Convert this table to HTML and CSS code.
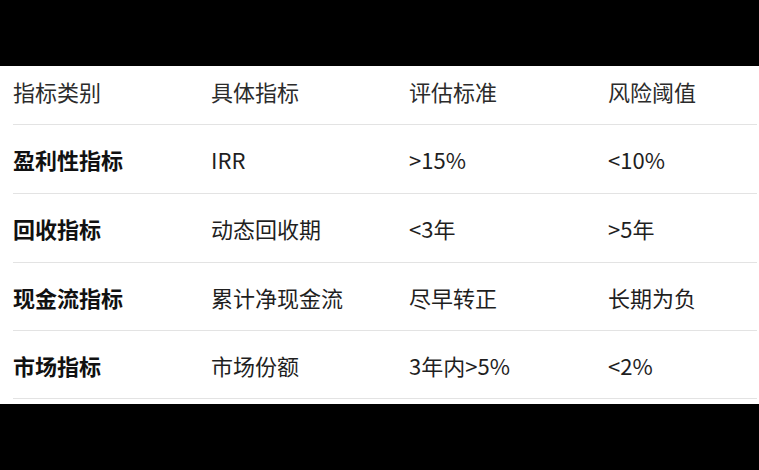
FILE: index.html
```html
<!DOCTYPE html>
<html lang="zh">
<head>
<meta charset="utf-8">
<link rel="stylesheet" href="styles.css">
</head>
<body>
<div class="sheet">
  <div class="table">
    <div class="row head">
      <div class="cell">指标类别</div>
      <div class="cell">具体指标</div>
      <div class="cell">评估标准</div>
      <div class="cell">风险阈值</div>
    </div>
    <div class="row r1">
      <div class="cell key">盈利性指标</div>
      <div class="cell">IRR</div>
      <div class="cell">&gt;15%</div>
      <div class="cell">&lt;10%</div>
    </div>
    <div class="row r2">
      <div class="cell key">回收指标</div>
      <div class="cell">动态回收期</div>
      <div class="cell">&lt;3年</div>
      <div class="cell">&gt;5年</div>
    </div>
    <div class="row r3">
      <div class="cell key">现金流指标</div>
      <div class="cell">累计净现金流</div>
      <div class="cell">尽早转正</div>
      <div class="cell">长期为负</div>
    </div>
    <div class="row r4">
      <div class="cell key">市场指标</div>
      <div class="cell">市场份额</div>
      <div class="cell">3年内&gt;5%</div>
      <div class="cell">&lt;2%</div>
    </div>
  </div>
</div>
</body>
</html>
```

FILE: styles.css
```css
html, body {
  margin: 0;
  padding: 0;
  background: #000;
  width: 759px;
  height: 470px;
  overflow: hidden;
}
.sheet {
  margin-top: 66px;
  height: 338px;
  background: #fff;
  padding: 0 2px 0 13px;
  box-sizing: border-box;
  font-family: "Noto Sans CJK SC", sans-serif;
  font-size: 22px;
  color: #1f1f1f;
}
.row {
  display: grid;
  grid-template-columns: 198px 198px 199px 1fr;
  align-items: center;
  border-bottom: 1px solid #e3e3e3;
  box-sizing: border-box;
}
.head { height: 59px; padding-bottom: 9px; color: #2b2b2b; }
.r1, .r2 { height: 69px; }
.r3, .r4 { height: 68px; }
.cell { white-space: nowrap; line-height: 30px; }
.key { font-weight: 700; color: #111; }
```
